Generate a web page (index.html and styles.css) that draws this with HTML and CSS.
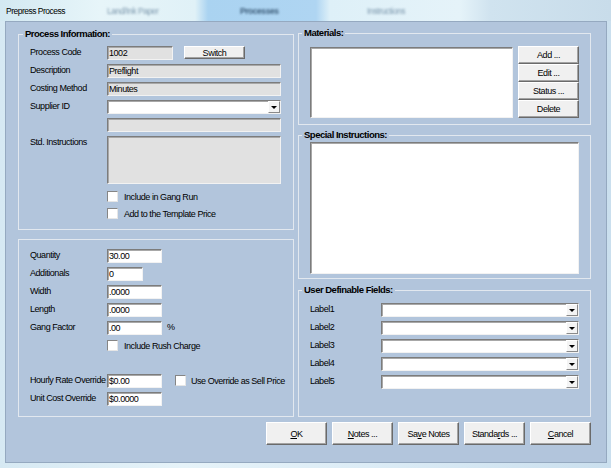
FILE: index.html
```html
<!DOCTYPE html>
<html>
<head>
<meta charset="utf-8">
<title>Prepress Process</title>
<link rel="stylesheet" href="styles.css">
</head>
<body>
<div class="window">
  <div class="titlebar">
    <span class="title">Prepress Process</span>
    <span class="ghost g1">Land/Ink Paper</span>
    <span class="ghost g2">Processes</span>
    <span class="ghost g3">Instructions</span>
  </div>
  <div class="client">
    <div class="columns">
      <div class="col-left">
        <fieldset class="group fs-info">
          <legend>Process Information:</legend>
          <div class="stack">
            <div class="row"><span class="lbl">Process Code</span><div class="field ro w66">1002</div><div class="btn switch">Switch</div></div>
            <div class="row"><span class="lbl">Description</span><div class="field ro w174">Preflight</div></div>
            <div class="row"><span class="lbl">Costing Method</span><div class="field ro w174">Minutes</div></div>
            <div class="row"><span class="lbl">Supplier ID</span><div class="field combo w174"><span class="drop"></span></div></div>
            <div class="row"><span class="lbl"></span><div class="field ro w174"></div></div>
            <div class="row tall"><span class="lbl">Std. Instructions</span><div class="field ro w174 memo"></div></div>
            <div class="check first"><span class="cb"></span><span>Include in Gang Run</span></div>
            <div class="check"><span class="cb"></span><span>Add to the Template Price</span></div>
          </div>
        </fieldset>
        <fieldset class="group fs-qty">
          <div class="stack">
            <div class="row"><span class="lbl">Quantity</span><div class="field w55">30.00</div></div>
            <div class="row"><span class="lbl">Additionals</span><div class="field w36">0</div></div>
            <div class="row"><span class="lbl">Width</span><div class="field w55">.0000</div></div>
            <div class="row"><span class="lbl">Length</span><div class="field w55">.0000</div></div>
            <div class="row"><span class="lbl">Gang Factor</span><div class="field w55">.00</div><span class="pct">%</span></div>
            <div class="check"><span class="cb"></span><span>Include Rush Charge</span></div>
            <div class="row spaced"><span class="lbl">Hourly Rate Override</span><div class="field w55">$0.00</div><span class="check inline"><span class="cb"></span><span>Use Override as Sell Price</span></span></div>
            <div class="row"><span class="lbl">Unit Cost Override</span><div class="field w55">$0.0000</div></div>
          </div>
        </fieldset>
      </div>
      <div class="col-right">
        <fieldset class="group fs-mat">
          <legend>Materials:</legend>
          <div class="mat-body">
            <div class="field list"></div>
            <div class="side-btns">
              <div class="btn side">Add ...</div>
              <div class="btn side">Edit ...</div>
              <div class="btn side">Status ...</div>
              <div class="btn side">Delete</div>
            </div>
          </div>
        </fieldset>
        <fieldset class="group fs-spec">
          <legend>Special Instructions:</legend>
          <div class="field textarea"></div>
        </fieldset>
        <fieldset class="group fs-user">
          <legend>User Definable Fields:</legend>
          <div class="stack">
            <div class="row"><span class="lbl ulbl">Label1</span><div class="field combo w198"><span class="drop"></span></div></div>
            <div class="row"><span class="lbl ulbl">Label2</span><div class="field combo w198"><span class="drop"></span></div></div>
            <div class="row"><span class="lbl ulbl">Label3</span><div class="field combo w198"><span class="drop"></span></div></div>
            <div class="row"><span class="lbl ulbl">Label4</span><div class="field combo w198"><span class="drop"></span></div></div>
            <div class="row"><span class="lbl ulbl">Label5</span><div class="field combo w198"><span class="drop"></span></div></div>
          </div>
        </fieldset>
      </div>
    </div>
    <div class="actions">
      <div class="btn action"><span><u>O</u>K</span></div>
      <div class="btn action"><span><u>N</u>otes ...</span></div>
      <div class="btn action"><span>Sa<u>v</u>e Notes</span></div>
      <div class="btn action"><span>Standa<u>r</u>ds ...</span></div>
      <div class="btn action"><span><u>C</u>ancel</span></div>
    </div>
  </div>
</div>
</body>
</html>
```
FILE: styles.css
```css
* { box-sizing: border-box; }
html, body { margin: 0; padding: 0; }
body {
  width: 611px;
  height: 468px;
  overflow: hidden;
  font-family: "Liberation Sans", Arial, sans-serif;
  font-size: 9px;
  letter-spacing: -0.45px;
  color: #000;
  background: #dbe8f3;
}
.window {
  width: 611px;
  height: 468px;
  display: flex;
  flex-direction: column;
  background: linear-gradient(to right, #d6e9f3 0, #e6f3f9 30%, #dcecf6 60%, #cadfee 100%);
}
.titlebar {
  height: 21px;
  display: flex;
  align-items: center;
  padding-left: 6px;
  background: linear-gradient(to right, #d3e9f2 0px, #e7f5f9 100px, #e0f1f7 195px, #aad3f1 208px, #afd5f2 316px, #def0f8 330px, #e5f3f9 460px, #d0e3ef 490px, #c8dcea 611px);
  overflow: hidden;
}
.title {
  width: 101px;
  font-size: 8.5px;
  letter-spacing: -0.5px;
  white-space: nowrap;
}
.ghost {
  font-size: 8.5px;
  white-space: nowrap;
  filter: blur(1.3px);
  color: #7d98ad;
}
.g1 { width: 133px; }
.g2 { width: 127px; color: #3f5f7c; font-weight: bold; }
.g3 { width: 100px; }
.client {
  margin: 0 4px 0 5px;
  height: 442px;
  background: #b2c5dc;
  border: 1px solid #95a9c0;
  padding: 5px 15px 0 12px;
}
.columns {
  display: flex;
  gap: 4px;
  height: 390px;
}
.col-left {
  width: 276px;
  display: flex;
  flex-direction: column;
  gap: 9px;
  padding-top: 1px;
}
.col-right {
  flex: 1;
  display: flex;
  flex-direction: column;
}
.group {
  margin: 0;
  min-width: 0;
  border: 1px solid #e2e8ef;
}
.group legend {
  font-weight: bold;
  font-size: 9.5px;
  letter-spacing: -0.5px;
  line-height: 12px;
  padding: 0 2px;
  margin-left: -7px;
}
.fs-mat legend, .fs-spec legend, .fs-user legend { margin-left: -8px; }
.fs-info { height: 202px; padding: 6px 12px 0 11px; }
.fs-qty { height: 178px; padding: 9px 12px 0 11px; }
.fs-mat { height: 98px; padding: 7px 10px 0 11px; margin-bottom: 4px; }
.fs-spec { height: 150px; padding: 1px 10px 0 11px; margin-bottom: 5px; }
.fs-user { height: 133px; padding: 7px 10px 0 11px; }

.stack { display: flex; flex-direction: column; gap: 4px; }
.row { display: flex; align-items: flex-start; height: 14px; }
.row.tall { height: 48px; }
.row.spaced { margin-top: 18px; }
.lbl {
  width: 77px;
  flex: none;
  line-height: 12px;
  white-space: nowrap;
}
.ulbl { width: 71px; }

.field {
  height: 14px;
  line-height: 12px;
  padding-left: 1px;
  background: #fff;
  border: 1px solid;
  border-color: #7c7c7c #f2f2f2 #f2f2f2 #7c7c7c;
  box-shadow: inset 1px 1px 0 #a8a8a8;
  white-space: nowrap;
  flex: none;
}
.ro { background: #e1e1e1; }
.w66 { width: 66px; }
.w174 { width: 174px; }
.w55 { width: 55px; }
.w36 { width: 36px; }
.w198 { width: 198px; }
.memo { height: 48px; }
.pct { margin-left: 5px; line-height: 12px; }

.combo {
  display: flex;
  justify-content: flex-end;
  padding: 0;
}
.drop {
  width: 12px;
  height: 12px;
  background: #f4f4f4;
  border: 1px solid;
  border-color: #fff #8a8a8a #8a8a8a #fff;
  display: flex;
  align-items: center;
  justify-content: center;
}
.drop::after {
  content: "";
  border-left: 3px solid transparent;
  border-right: 3px solid transparent;
  border-top: 3px solid #000;
}

.btn {
  background: #f0f0f0;
  border: 1px solid;
  border-color: #ffffff #6a6a6a #6a6a6a #ffffff;
  box-shadow: inset -1px -1px 0 #a3a3a3;
  display: flex;
  align-items: center;
  justify-content: center;
  white-space: nowrap;
  flex: none;
}
.switch { width: 61px; height: 13px; margin-left: 11px; }

.check {
  display: flex;
  align-items: center;
  gap: 6px;
  height: 13px;
  margin-left: 77px;
  white-space: nowrap;
}
.check.first { margin-top: 2px; }
.check.inline { margin-left: 13px; gap: 5px; }
.cb {
  width: 11px;
  height: 11px;
  flex: none;
  background: #fff;
  border: 1px solid;
  border-color: #858585 #e6e6e6 #e6e6e6 #858585;
}

.mat-body { display: flex; align-items: flex-start; }
.list { width: 203px; height: 71px; margin-top: 1px; }
.side-btns { margin-left: 5px; display: flex; flex-direction: column; }
.side { width: 61px; height: 18px; }
.textarea { width: 269px; height: 132px; }

.actions {
  display: flex;
  justify-content: flex-end;
  gap: 5px;
  margin-top: 5px;
}
.action { width: 61px; height: 23px; }
.action u { text-decoration: underline; }
```
